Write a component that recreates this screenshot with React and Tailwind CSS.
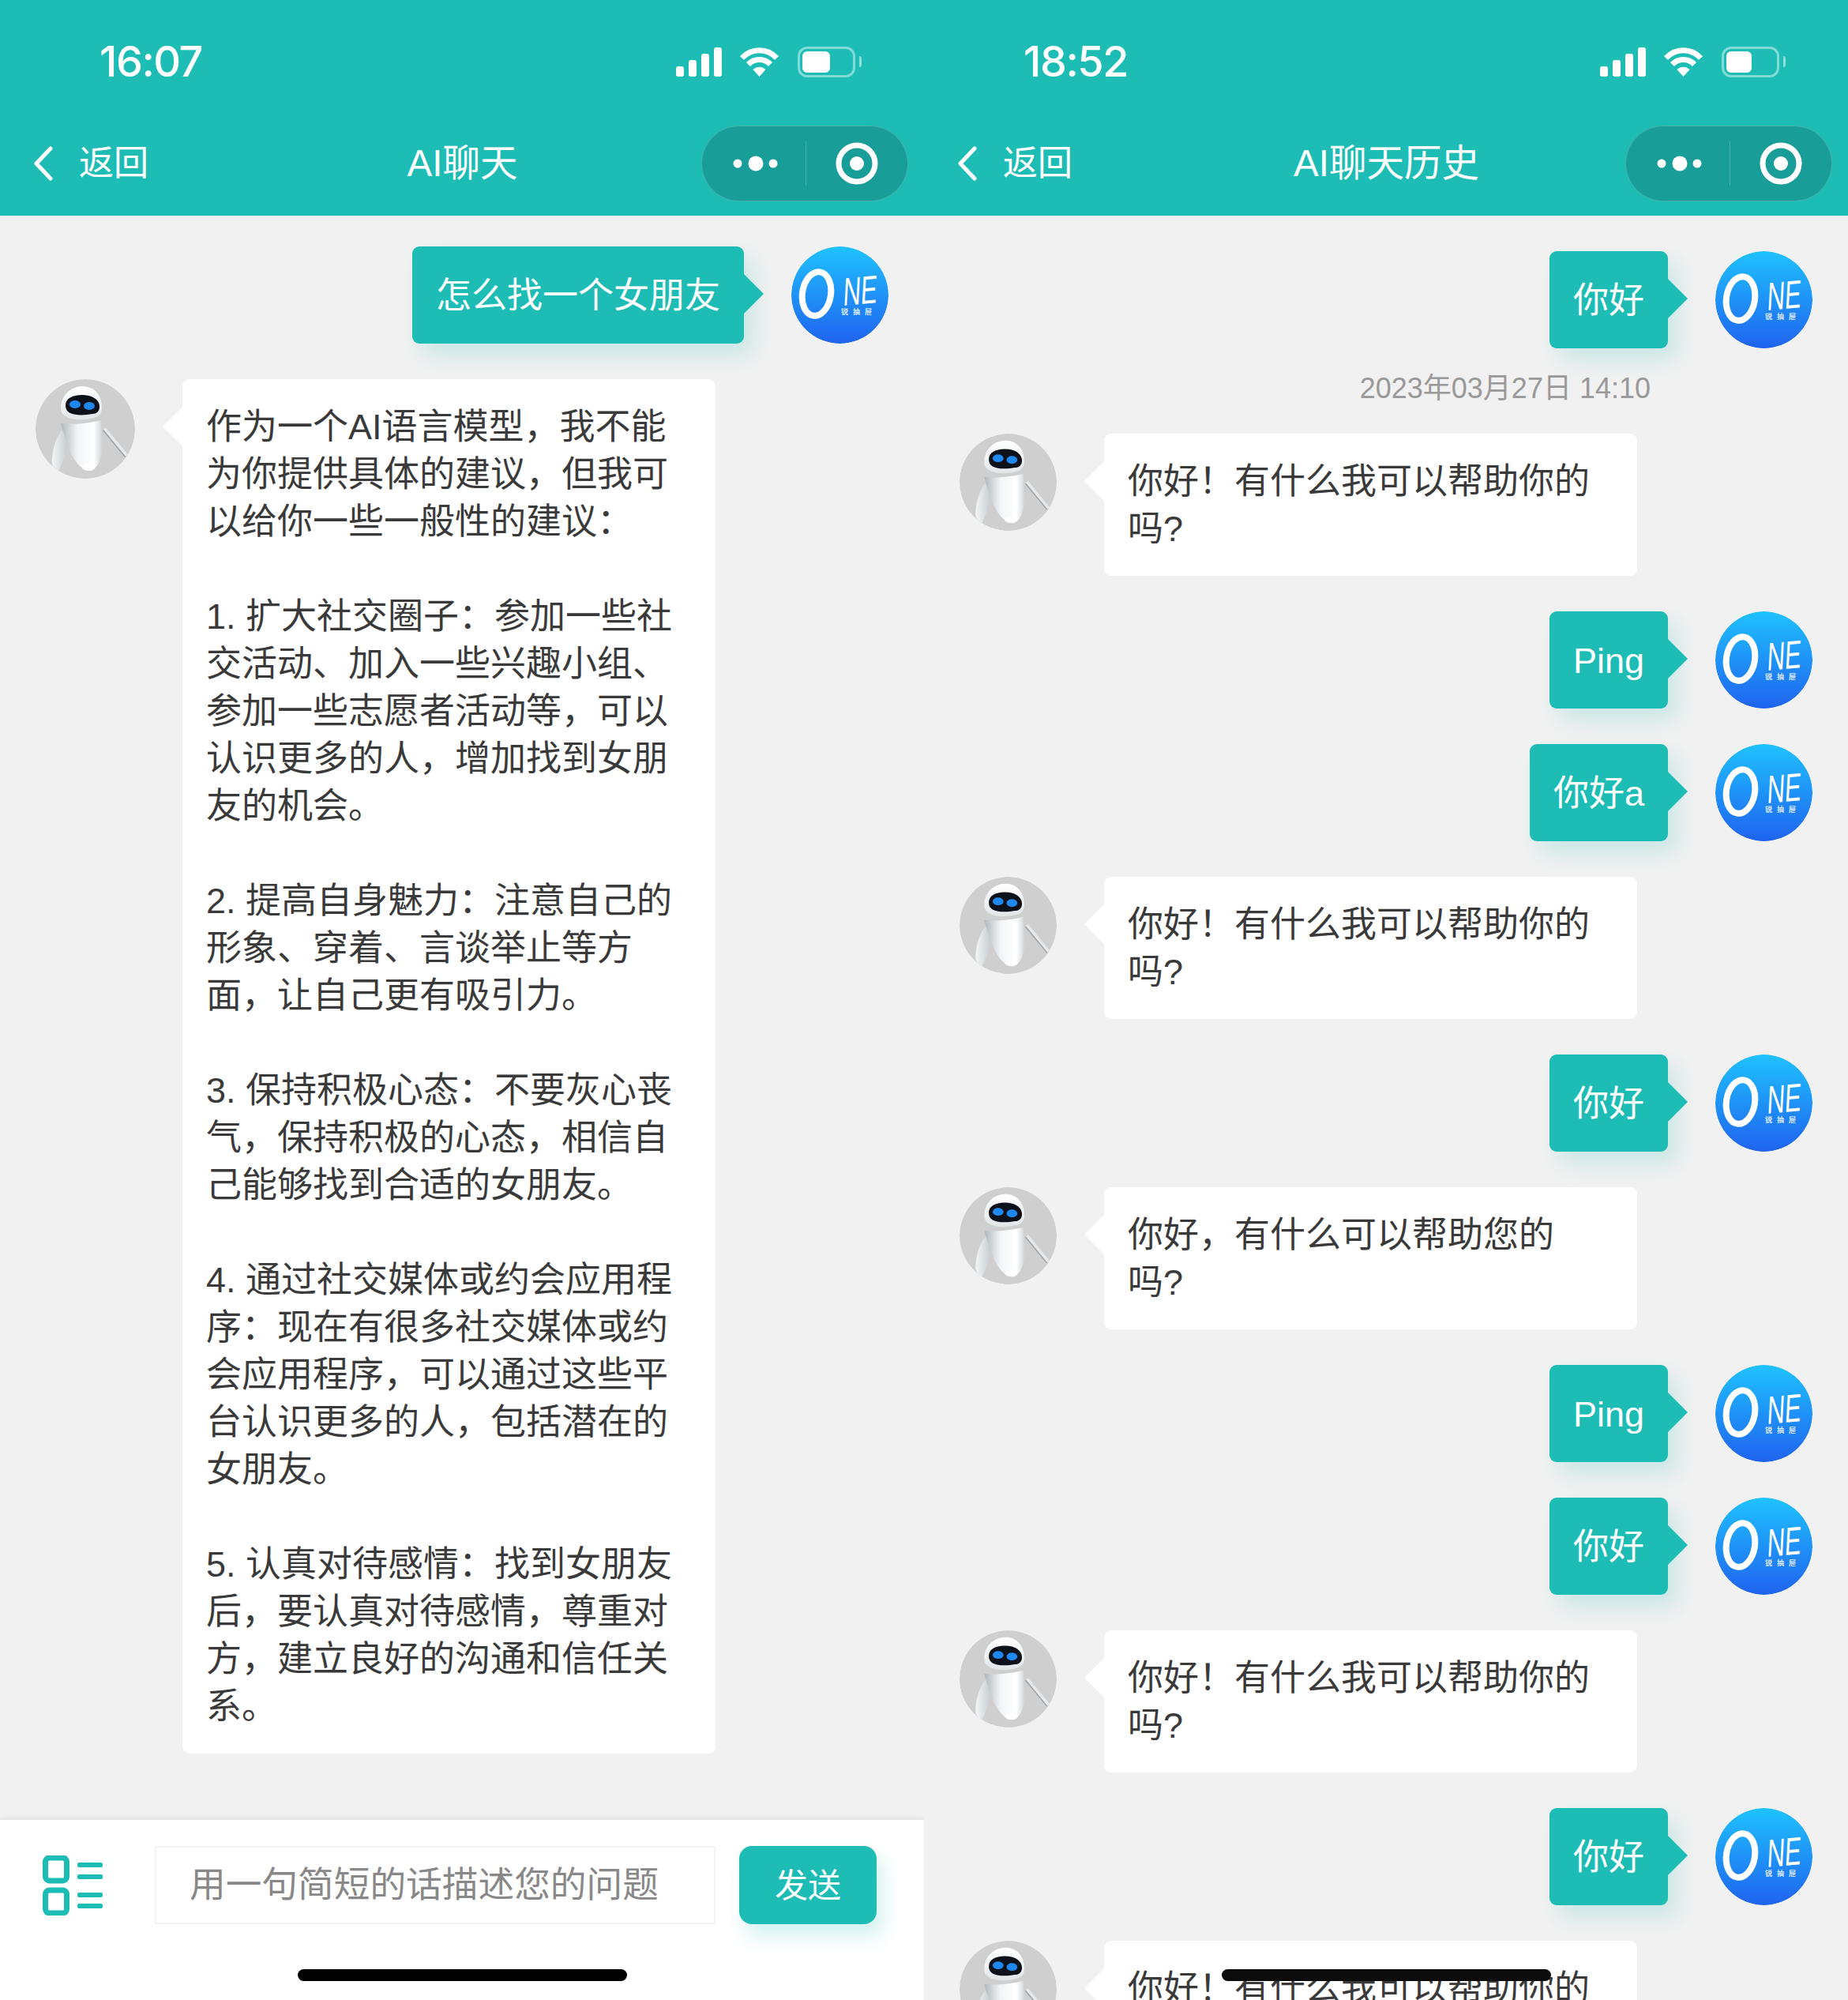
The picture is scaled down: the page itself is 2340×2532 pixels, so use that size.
const FONT = "font-['Liberation_Sans','Noto_Sans_CJK_SC',sans-serif]";

function Signal() {
  return (
    <svg width="58" height="37" viewBox="0 0 58 37" fill="#fff">
      <rect x="0" y="24" width="10" height="13" rx="3" />
      <rect x="16" y="16" width="10" height="21" rx="3" />
      <rect x="32" y="8" width="10" height="29" rx="3" />
      <rect x="48" y="0" width="10" height="37" rx="3" />
    </svg>
  );
}

function Wifi() {
  return (
    <svg width="51" height="37" viewBox="0 0 51 37" fill="none" stroke="#fff" strokeWidth="7">
      <path d="M3.5 13.5C15.5 0.5 35.5 0.5 47.5 13.5" />
      <path d="M11.5 21.5C19 13.5 32 13.5 39.5 21.5" />
      <path d="M25.5 37L17.5 28C22 23.5 29 23.5 33.5 28Z" fill="#fff" stroke="none" />
    </svg>
  );
}

function Battery({ level }) {
  return (
    <div className="flex items-center gap-[5px]">
      <div className="w-[73px] h-[39px] rounded-[12px] border-[3px] border-white/45 p-[3px] flex">
        <div className="h-full rounded-[6px] bg-white" style={{ width: level }} />
      </div>
      <div className="w-[3px] h-[14px] rounded-r-[3px] bg-white/50" />
    </div>
  );
}

function Header({ time, title, level }) {
  return (
    <header className="h-[273px] shrink-0 bg-[#1dbdb5] text-white flex flex-col">
      <div className="h-[156px] pl-[126px] pr-[79px] flex items-center justify-between">
        <span className="font-['Inter',sans-serif] font-medium text-[54px] tracking-[-1.5px] leading-none">{time}</span>
        <div className="flex items-center">
          <Signal />
          <div className="w-[22px]" />
          <Wifi />
          <div className="w-[23px]" />
          <Battery level={level} />
        </div>
      </div>
      <div className="h-[117px] pb-[16px] pl-[21px] pr-[20px] grid grid-cols-[1fr_auto_1fr] items-center">
        <div className="ml-[20px] flex items-center">
          <svg width="24" height="44" viewBox="0 0 24 44" fill="none" stroke="#fff" strokeWidth="5" strokeLinecap="round" strokeLinejoin="round" className="ml-[2px]">
            <path d="M21 3L3 22L21 41" />
          </svg>
          <span className="ml-[33px] text-[44px] leading-none">返回</span>
        </div>
        <div className="text-[47.5px] leading-none text-center">{title}</div>
        <div className="flex justify-end">
          <div className="w-[262px] h-[96px] rounded-full bg-[#189d98] border border-white/20 flex items-center">
            <div className="flex-1 flex justify-center pl-[4px]">
              <svg width="58" height="20" viewBox="0 0 58 20" fill="#fff">
                <circle cx="6" cy="10" r="5.5" />
                <circle cx="29" cy="10" r="9.5" />
                <circle cx="51" cy="10" r="5.5" />
              </svg>
            </div>
            <div className="w-px h-[56px] bg-white/20" />
            <div className="w-[128px] flex justify-center">
              <svg width="54" height="54" viewBox="0 0 54 54" fill="none">
                <circle cx="27" cy="27" r="23" stroke="#fff" strokeWidth="7" />
                <circle cx="27" cy="27" r="9" fill="#fff" />
              </svg>
            </div>
          </div>
        </div>
      </div>
    </header>
  );
}

function OneLogo() {
  return (
    <svg width="123" height="123" viewBox="0 0 123 123" className="shrink-0 rounded-full">
      <circle cx="61.5" cy="61.5" r="61.5" fill="url(#oneGrad)" />
      <ellipse cx="32" cy="60" rx="18" ry="28" fill="none" stroke="#fff" strokeWidth="8" transform="rotate(9 32 60)" />
      <text fontSize="31" fill="#fff" fontFamily="Liberation Sans, sans-serif" transform="translate(65 75) rotate(-5) skewX(-8) scale(1 1.6)">NE</text>
      <text x="63" y="86" fontSize="9" fill="#fff" letterSpacing="6" fontFamily="Noto Sans CJK SC, sans-serif" fontWeight="700" opacity="0.85">锐抽屉</text>
    </svg>
  );
}

function EveAvatar({ size }) {
  return (
    <svg width={size} height={size} viewBox="0 0 126 126" className="shrink-0 rounded-full">
      <circle cx="63" cy="63" r="63" fill="#cfcfcf" />
      <path d="M87 63L115 97" stroke="#e6e8ea" strokeWidth="5" />
      <path d="M87 63L115 97" stroke="#9a9fa3" strokeWidth="1.5" transform="translate(-1.5 1.5)" />
      <path d="M33 65C39 62 43 64 41 72C39 90 36 104 29 116C22 112 20 108 21 100C22 86 27 72 33 65Z" fill="url(#eveArm)" />
      <path d="M32 56C50 58 66 56 83 52L84 88C84 104 76 116 68 116C58 116 46 100 42 86C38 74 34 66 32 56Z" fill="url(#eveBody)" />
      <ellipse cx="67" cy="112" rx="8" ry="4" fill="#fff" opacity="0.9" />
      <path d="M32 37C32 20 45 9 60 9C74 9 84 20 84 36C84 44 80 47 74 49C60 53 46 52 38 47C34 45 32 42 32 37Z" fill="url(#eveHead)" />
      <path d="M38 33C38 25 46 20 59 20C72 20 81 26 81 35C81 41 77 44 72 44C62 46 50 46 44 43C40 41 38 38 38 33Z" fill="#0d1119" />
      <ellipse cx="50" cy="32" rx="7" ry="5" fill="#1e88ee" />
      <ellipse cx="68" cy="34" rx="7" ry="5" fill="#1e88ee" />
    </svg>
  );
}

function UserMsg({ text }) {
  return (
    <div className="flex justify-end items-start">
      <div className="relative h-[123px] px-[30px] pt-[2px] flex items-center rounded-[9px] bg-[#1dbdb5] text-white text-[45px] leading-[60px] shadow-[12px_15px_27px_rgba(29,189,181,0.18)]">
        {text}
        <div className="absolute left-full top-[35px] w-0 h-0 border-y-[25px] border-y-transparent border-l-[25px] border-l-[#1dbdb5]" />
      </div>
      <div className="w-[60px] shrink-0" />
      <OneLogo />
    </div>
  );
}

function AiMsg({ text, avatar }) {
  return (
    <div className="flex items-start">
      <EveAvatar size={avatar} />
      <div className="ml-[60px] relative w-[675px] px-[30px] pt-[31px] pb-[29px] rounded-[9px] bg-white text-[#3a3a3a] text-[45px] leading-[60px] whitespace-pre-wrap">
        <div className="absolute right-full top-[35px] w-0 h-0 border-y-[25px] border-y-transparent border-r-[25px] border-r-white" />
        {text}
      </div>
    </div>
  );
}

const LONG = `作为一个AI语言模型，我不能
为你提供具体的建议，但我可
以给你一些一般性的建议：

1. 扩大社交圈子：参加一些社
交活动、加入一些兴趣小组、
参加一些志愿者活动等，可以
认识更多的人，增加找到女朋
友的机会。

2. 提高自身魅力：注意自己的
形象、穿着、言谈举止等方
面，让自己更有吸引力。

3. 保持积极心态：不要灰心丧
气，保持积极的心态，相信自
己能够找到合适的女朋友。

4. 通过社交媒体或约会应用程
序：现在有很多社交媒体或约
会应用程序，可以通过这些平
台认识更多的人，包括潜在的
女朋友。

5. 认真对待感情：找到女朋友
后，要认真对待感情，尊重对
方，建立良好的沟通和信任关
系。`;

const HELLO = "你好！有什么我可以帮助你的\n吗?";

function Footer() {
  return (
    <footer className="h-[228px] shrink-0 bg-white shadow-[0_-2px_6px_rgba(0,0,0,0.08)] relative">
      <div className="pt-[33px] pl-[54px] flex items-center">
        <svg width="76" height="76" viewBox="0 0 76 76" fill="none" className="shrink-0">
          <rect x="3.5" y="3" width="27" height="29" rx="5" stroke="#1dbdb5" strokeWidth="7" />
          <rect x="3.5" y="44" width="27" height="29" rx="5" stroke="#1dbdb5" strokeWidth="7" />
          <rect x="44" y="9" width="32" height="6" rx="2" fill="#1dbdb5" />
          <rect x="44" y="24" width="32" height="6" rx="2" fill="#1dbdb5" />
          <rect x="44" y="47" width="32" height="6" rx="2" fill="#1dbdb5" />
          <rect x="44" y="61" width="32" height="6" rx="2" fill="#1dbdb5" />
        </svg>
        <div className="ml-[66px] w-[710px] h-[99px] border-2 border-[#f3f3f3] pl-[42px] pt-[2px] flex items-center text-[45.7px] text-[#888888]">
          用一句简短的话描述您的问题
        </div>
        <div className="ml-[30px] w-[174px] h-[99px] rounded-[16px] bg-[#1dbdb5] text-white text-[42px] pt-[2px] flex items-center justify-center shadow-[8px_15px_24px_rgba(29,189,181,0.2)]">
          发送
        </div>
      </div>
      <div className="mt-[57px] mx-auto w-[417px] h-[15px] rounded-full bg-black" />
    </footer>
  );
}

function LeftPhone() {
  return (
    <div className="w-[1170px] h-[2532px] shrink-0 bg-[#f1f1f1] flex flex-col overflow-hidden">
      <Header time="16:07" title="AI聊天" level={35} />
      <main className="flex-1 pt-[39px] pl-[45px] pr-[45px] flex flex-col gap-[45px] overflow-hidden">
        <UserMsg text="怎么找一个女朋友" />
        <AiMsg text={LONG} avatar={126} />
      </main>
      <Footer />
    </div>
  );
}

function RightPhone() {
  return (
    <div className="relative w-[1170px] h-[2532px] shrink-0 bg-[#f1f1f1] flex flex-col overflow-hidden">
      <Header time="18:52" title="AI聊天历史" level={32} />
      <main className="flex-1 pt-[45px] px-[45px] flex flex-col overflow-hidden">
        <UserMsg text="你好" />
        <div className="mt-[24px] mb-[30px] h-[54px] pr-[205px] flex items-center justify-end text-[36px] text-[#999999]">2023年03月27日 14:10</div>
        <div className="flex flex-col gap-[45px]">
          <AiMsg text={HELLO} avatar={123} />
          <UserMsg text="Ping" />
          <UserMsg text="你好a" />
          <AiMsg text={HELLO} avatar={123} />
          <UserMsg text="你好" />
          <AiMsg text={"你好，有什么可以帮助您的\n吗?"} avatar={123} />
          <UserMsg text="Ping" />
          <UserMsg text="你好" />
          <AiMsg text={HELLO} avatar={123} />
          <UserMsg text="你好" />
          <AiMsg text={HELLO} avatar={123} />
        </div>
      </main>
      <div className="absolute left-[377px] top-[2493px] w-[417px] h-[15px] rounded-full bg-[#0c0c0c]" />
    </div>
  );
}

export default function App() {
  return (
    <div className={`w-[2340px] h-[2532px] flex ${FONT}`}>
      <svg className="absolute w-0 h-0" aria-hidden="true">
        <defs>
          <linearGradient id="oneGrad" x1="0.5" y1="0" x2="0.5" y2="1">
            <stop offset="0" stopColor="#1fc2ff" />
            <stop offset="1" stopColor="#1f63ef" />
          </linearGradient>
          <linearGradient id="eveBody" x1="0" y1="0" x2="1" y2="0">
            <stop offset="0" stopColor="#aeb8bd" />
            <stop offset="0.4" stopColor="#f2f4f5" />
            <stop offset="0.8" stopColor="#ffffff" />
            <stop offset="1" stopColor="#d2d6d9" />
          </linearGradient>
          <linearGradient id="eveHead" x1="0" y1="0" x2="0" y2="1">
            <stop offset="0" stopColor="#ffffff" />
            <stop offset="1" stopColor="#e2e6e8" />
          </linearGradient>
          <linearGradient id="eveArm" x1="0" y1="0" x2="1" y2="0">
            <stop offset="0" stopColor="#f4f6f7" />
            <stop offset="1" stopColor="#c2cacd" />
          </linearGradient>
        </defs>
      </svg>
      <LeftPhone />
      <RightPhone />
    </div>
  );
}
